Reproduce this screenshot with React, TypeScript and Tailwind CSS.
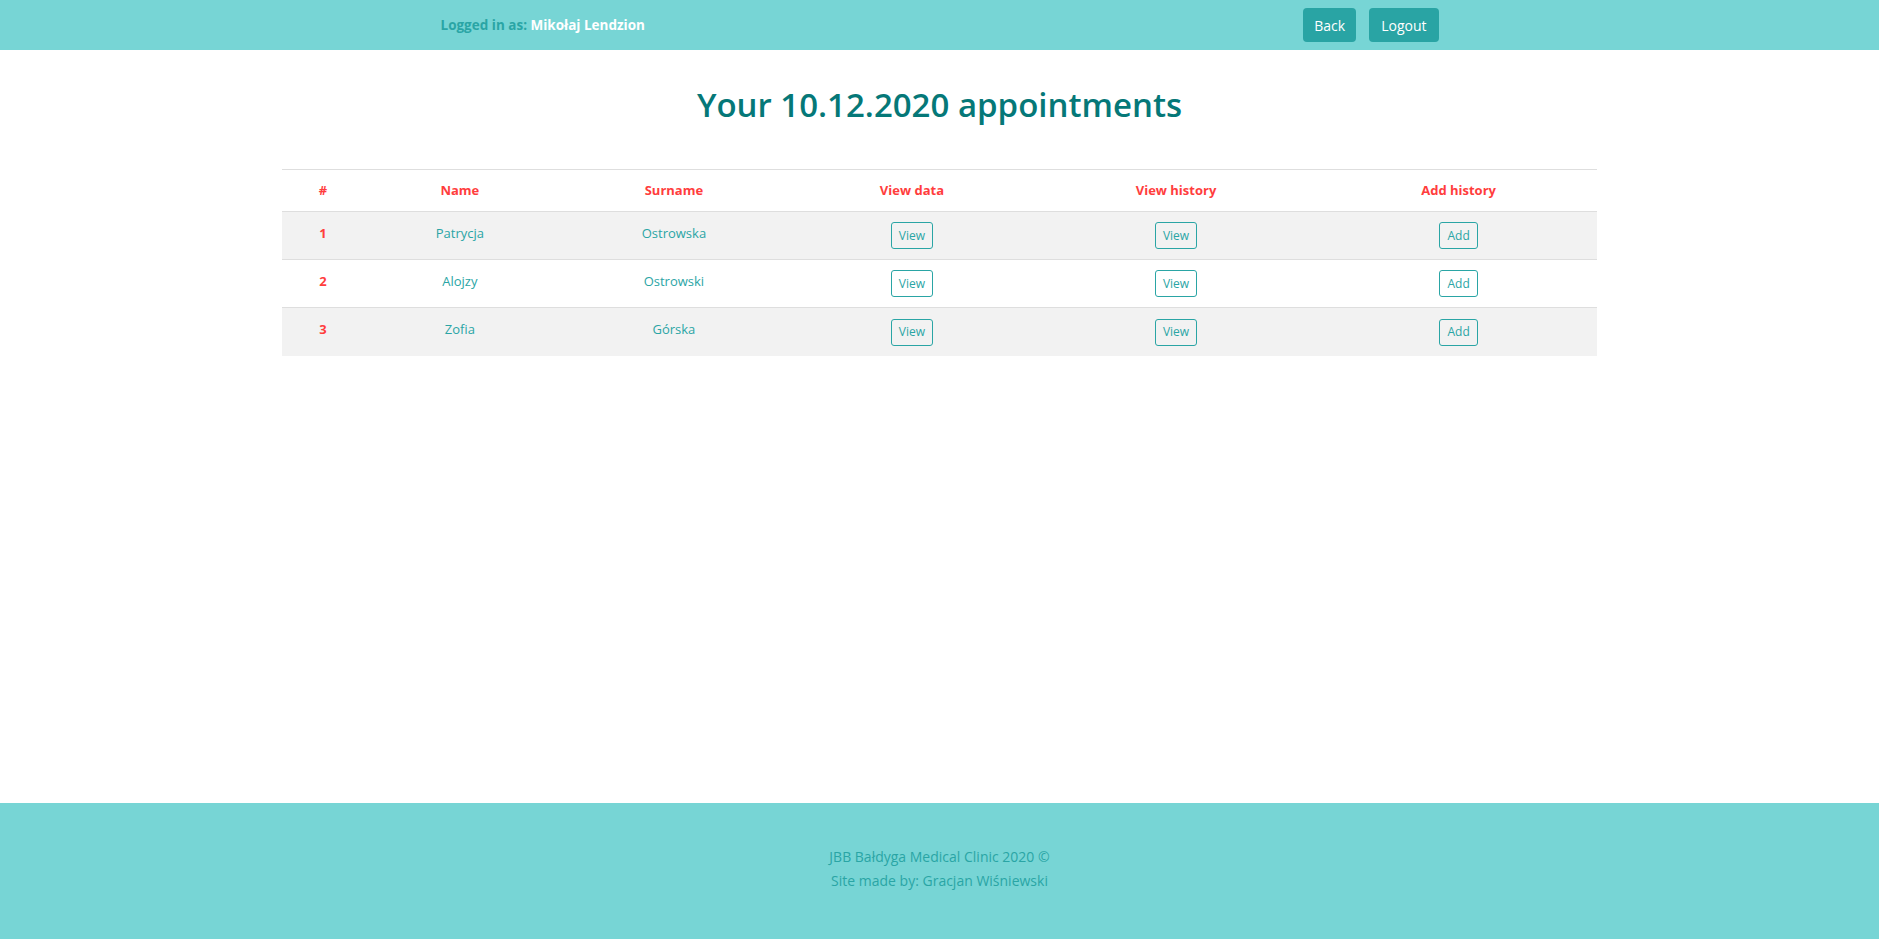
import React from 'react';

interface Patient {
  id: number;
  name: string;
  surname: string;
}

const patients: Patient[] = [
  { id: 1, name: 'Patrycja', surname: 'Ostrowska' },
  { id: 2, name: 'Alojzy', surname: 'Ostrowski' },
  { id: 3, name: 'Zofia', surname: 'Górska' },
];

const font = { fontFamily: '"Open Sans", "Noto Sans", sans-serif' };

const OutlineButton: React.FC<{ label: string }> = ({ label }) => (
  <button className="h-[27px] px-[7px] border border-[#2aa5a5] rounded-[3px] text-[12px] text-[#2aa5a5] bg-transparent leading-none">
    {label}
  </button>
);

const App: React.FC = () => {
  return (
    <div className="min-h-[939px] flex flex-col bg-white" style={font}>
      <nav className="h-[50px] bg-[#77d5d5] shrink-0">
        <div className="w-[998px] h-full mx-auto flex items-center justify-between">
          <span className="text-[13.5px] font-bold text-[#2aa5a5]">
            Logged in as: <span className="text-white">Mikołaj Lendzion</span>
          </span>
          <div className="flex gap-[13px]">
            <button className="h-[34px] px-[11px] rounded-[4px] bg-[#29a4a4] text-white text-[14px]">Back</button>
            <button className="h-[34px] px-[12px] rounded-[4px] bg-[#29a4a4] text-white text-[14px]">Logout</button>
          </div>
        </div>
      </nav>

      <main className="flex-1">
        <h1 className="text-center text-[33px] text-[#057878] font-semibold mt-[28px] mb-[38px] leading-[53px]">
          Your 10.12.2020 appointments
        </h1>

        <table className="w-[70%] mx-auto border-collapse table-fixed">
          <colgroup>
            <col className="w-[82px]" />
            <col className="w-[192px]" />
            <col className="w-[236px]" />
            <col className="w-[240px]" />
            <col className="w-[288px]" />
            <col className="w-[277px]" />
          </colgroup>
          <thead>
            <tr className="h-[42px] border-t border-b border-[#dedede]">
              {['#', 'Name', 'Surname', 'View data', 'View history', 'Add history'].map((h) => (
                <th key={h} className="text-[13px] font-bold text-[#ff3d3d] text-center">
                  {h}
                </th>
              ))}
            </tr>
          </thead>
          <tbody>
            {patients.map((p, i) => (
              <tr
                key={p.id}
                className={`h-[48px] ${i < patients.length - 1 ? 'border-b border-[#dedede]' : ''} ${i % 2 === 0 ? 'bg-[#f2f2f2]' : 'bg-white'}`}
              >
                <td className="text-center text-[13px] font-bold text-[#ff3d3d] pb-[4px]">{p.id}</td>
                <td className="text-center text-[13px] text-[#2aa5a5] pb-[4px]">{p.name}</td>
                <td className="text-center text-[13px] text-[#2aa5a5] pb-[4px]">{p.surname}</td>
                <td className="text-center"><OutlineButton label="View" /></td>
                <td className="text-center"><OutlineButton label="View" /></td>
                <td className="text-center"><OutlineButton label="Add" /></td>
              </tr>
            ))}
          </tbody>
        </table>
      </main>

      <footer className="h-[136px] bg-[#77d5d5] shrink-0 flex flex-col items-center justify-center pb-[4px] text-[14px] text-[#2aa5a5] leading-[24px]">
        <p>JBB Bałdyga Medical Clinic 2020 ©</p>
        <p>Site made by: Gracjan Wiśniewski</p>
      </footer>
    </div>
  );
};

export default App;
